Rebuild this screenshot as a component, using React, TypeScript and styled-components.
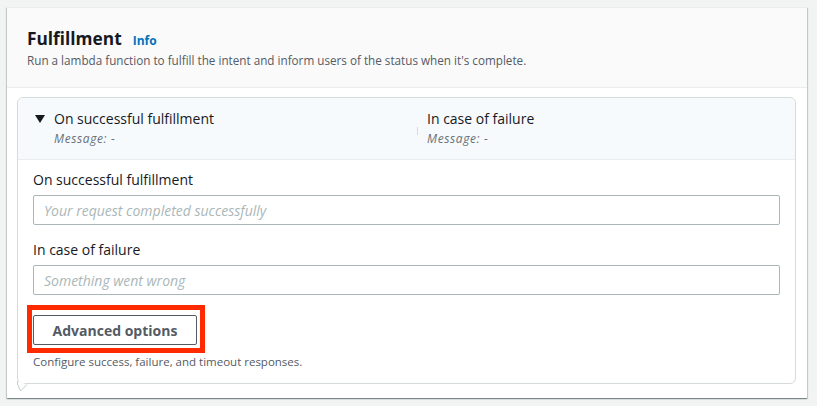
import React from "react";
import styled, { createGlobalStyle } from "styled-components";

const Global = createGlobalStyle`
  html, body { margin: 0; padding: 0; background: #f2f3f3; }
  body { font-family: "Open Sans", "Noto Sans", sans-serif; color: #16191f; }
  * { box-sizing: border-box; }
`;

const Page = styled.div`
  padding: 7px 10px 9px 7px;
  width: 817px;
  height: 406px;
`;

const Card = styled.section`
  width: 800px;
  background: #ffffff;
  border-top: 1px solid #eaeded;
  box-shadow: 0 1px 1px 0 rgba(0, 28, 36, 0.3), 1px 1px 1px 0 rgba(0, 28, 36, 0.15),
    -1px 1px 1px 0 rgba(0, 28, 36, 0.15);
`;

const CardHeader = styled.header`
  background: #fafafa;
  border-bottom: 1px solid #eaeded;
  padding: 20px 20px 19px;
`;

const TitleRow = styled.div`
  display: flex;
  align-items: baseline;
  gap: 11px;
`;

const Title = styled.h2`
  margin: 0;
  font-size: 17.3px;
  line-height: 22px;
  font-weight: 700;
  color: #16191f;
`;

const InfoLink = styled.a`
  font-size: 12px;
  font-weight: 700;
  color: #0073bb;
  text-decoration: none;
`;

const Description = styled.p`
  margin: 2px 0 0;
  font-size: 11.7px;
  line-height: 16px;
  color: #545b64;
`;

const CardBody = styled.div`
  padding: 9px 11px 14px 10px;
`;

const Panel = styled.div`
  position: relative;
  border: 1px solid #d5dbdb;
  border-radius: 6px;
  background: #ffffff;
`;

const Tail = styled.svg`
  position: absolute;
  left: -1px;
  bottom: -10px;
  width: 12px;
  height: 12px;
  overflow: visible;
`;

const PanelHeader = styled.div`
  display: grid;
  grid-template-columns: 382px 1fr;
  padding: 11px 17px 12px;
  background: #f7fafd;
  border-bottom: 1px solid #eaeded;
  border-radius: 6px 6px 0 0;
`;

const HeaderCol = styled.div`
  display: flex;
  align-items: flex-start;
`;

const Caret = styled.span`
  width: 19px;
  flex: none;
  display: flex;
  padding-top: 6px;
`;

const VDivider = styled.span`
  width: 1px;
  height: 8px;
  background: #d5dbdb;
  margin: 18px 9px 0 0;
  flex: none;
`;

const HeaderText = styled.div`
  display: flex;
  flex-direction: column;
`;

const HeaderTitle = styled.div`
  font-size: 14px;
  line-height: 20px;
  color: #16191f;
`;

const HeaderMeta = styled.div`
  margin-top: 2px;
  font-size: 12px;
  letter-spacing: 0.6px;
  line-height: 16px;
  font-style: italic;
  color: #687078;
`;

const PanelBody = styled.div`
  padding: 10px 15px 13px;
  display: flex;
  flex-direction: column;
`;

const Field = styled.div<{ $gap?: number }>`
  display: flex;
  flex-direction: column;
  margin-top: ${(p) => p.$gap ?? 0}px;
`;

const Label = styled.label`
  font-size: 14px;
  line-height: 20px;
  color: #16191f;
  margin-bottom: 5px;
`;

const Input = styled.input`
  height: 30px;
  width: 100%;
  border: 1px solid #aab7b8;
  border-radius: 2px;
  padding: 0 10px;
  font-family: "Open Sans", "Noto Sans", sans-serif;
  font-size: 14px;
  color: #16191f;
  background: #ffffff;
  &::placeholder {
    color: #aab7b8;
    font-style: italic;
  }
`;

const Highlight = styled.div`
  position: relative;
  margin-top: 20px;
  align-self: flex-start;
  &::after {
    content: "";
    position: absolute;
    top: -10px;
    left: -6px;
    right: -8px;
    bottom: -8px;
    border: 5px solid #ff2a00;
    pointer-events: none;
  }
`;

const Button = styled.button`
  display: block;
  width: 164px;
  height: 30px;
  border: 1px solid #545b64;
  border-radius: 2px;
  background: #ffffff;
  color: #545b64;
  font-family: "Open Sans", "Noto Sans", sans-serif;
  font-size: 14px;
  font-weight: 700;
  padding: 0;
`;

const Helper = styled.div`
  margin-top: 9px;
  font-size: 11.5px;
  line-height: 16px;
  color: #545b64;
`;

export default function App() {
  return (
    <>
      <Global />
      <Page>
        <Card>
          <CardHeader>
            <TitleRow>
              <Title>Fulfillment</Title>
              <InfoLink href="#">Info</InfoLink>
            </TitleRow>
            <Description>
              Run a lambda function to fulfill the intent and inform users of the status when it's complete.
            </Description>
          </CardHeader>
          <CardBody>
            <Panel>
              <PanelHeader>
                <HeaderCol>
                  <Caret>
                    <svg width="10" height="8" viewBox="0 0 10 8">
                      <polygon points="0,0 10,0 5,8" fill="#16191f" />
                    </svg>
                  </Caret>
                  <HeaderText>
                    <HeaderTitle>On successful fulfillment</HeaderTitle>
                    <HeaderMeta>Message: -</HeaderMeta>
                  </HeaderText>
                </HeaderCol>
                <HeaderCol>
                  <VDivider />
                  <HeaderText>
                    <HeaderTitle>In case of failure</HeaderTitle>
                    <HeaderMeta>Message: -</HeaderMeta>
                  </HeaderText>
                </HeaderCol>
              </PanelHeader>
              <PanelBody>
                <Field>
                  <Label>On successful fulfillment</Label>
                  <Input placeholder="Your request completed successfully" />
                </Field>
                <Field $gap={15}>
                  <Label>In case of failure</Label>
                  <Input placeholder="Something went wrong" />
                </Field>
                <Highlight>
                  <Button>Advanced options</Button>
                </Highlight>
                <Helper>Configure success, failure, and timeout responses.</Helper>
              </PanelBody>
              <Tail viewBox="0 0 12 12">
                <path d="M0.5 0 L0.5 3 L3.5 10 L10 3.5" fill="#ffffff" stroke="#c4cbcb" strokeWidth="1" />
              </Tail>
            </Panel>
          </CardBody>
        </Card>
      </Page>
    </>
  );
}
